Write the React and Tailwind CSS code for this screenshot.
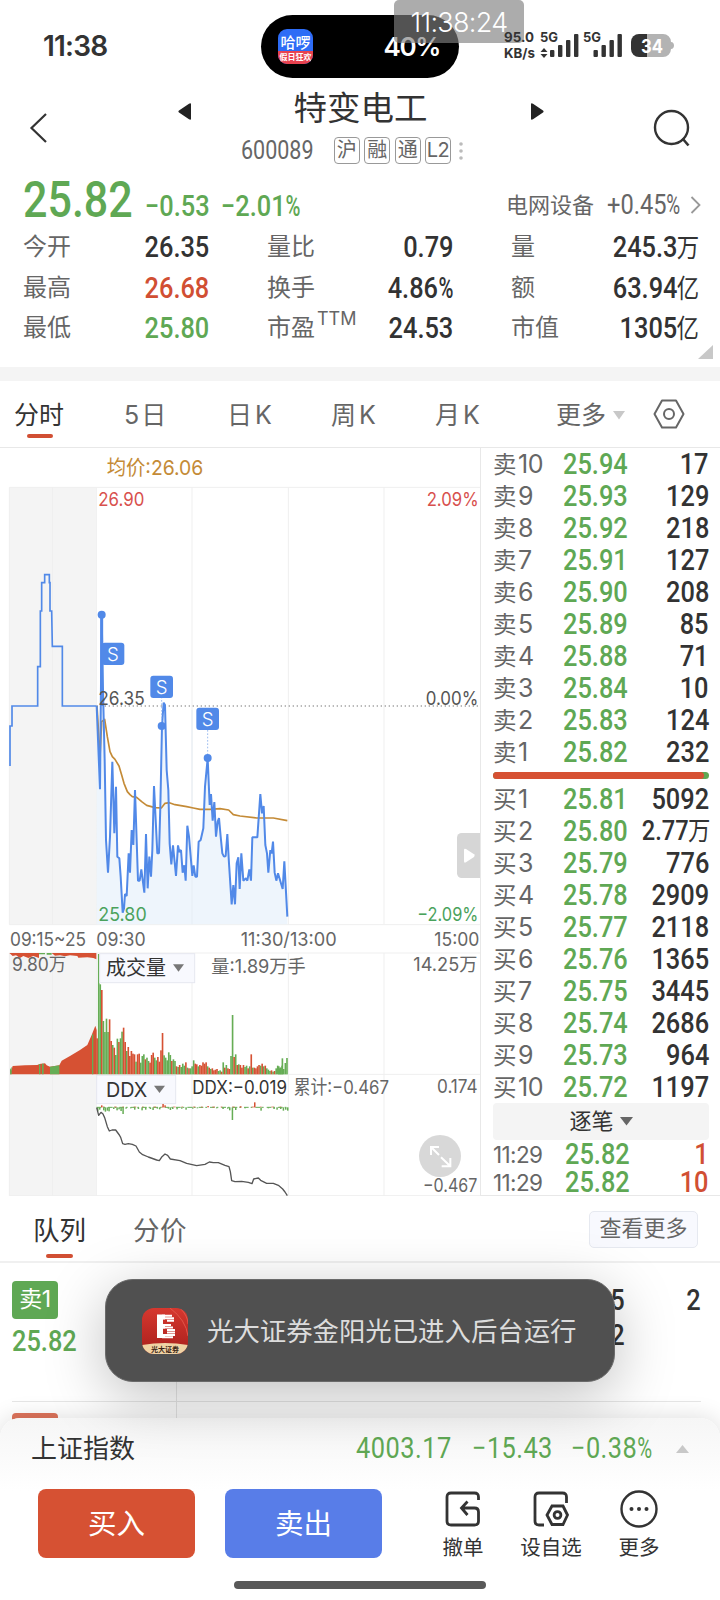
import React from 'react'

// price levels of the order book
const asks = [
  ['卖10', '25.94', '17'],
  ['卖9', '25.93', '129'],
  ['卖8', '25.92', '218'],
  ['卖7', '25.91', '127'],
  ['卖6', '25.90', '208'],
  ['卖5', '25.89', '85'],
  ['卖4', '25.88', '71'],
  ['卖3', '25.84', '10'],
  ['卖2', '25.83', '124'],
  ['卖1', '25.82', '232'],
]

const bids = [
  ['买1', '25.81', '5092'],
  ['买2', '25.80', '2.77万'],
  ['买3', '25.79', '776'],
  ['买4', '25.78', '2909'],
  ['买5', '25.77', '2118'],
  ['买6', '25.76', '1365'],
  ['买7', '25.75', '3445'],
  ['买8', '25.74', '2686'],
  ['买9', '25.73', '964'],
  ['买10', '25.72', '1197'],
]

const preOpen =
  '30,228 30,108 36,108 36,48 113,48 113,-70 121,-70 121,-237 125,-237 125,-322 134,-322 134,-346 148,-346 148,-322 150,-322 150,-237 155,-237 157,-131 187,-131 187,48 290,48'

const priceLine =
  '290,48 300,298 305,-226 309,0 314,210 318,450 324,548 330,440 337,215 343,430 348,290 352,500 358,505 362,560 368,668 372,655 375,612 380,618 386,490 390,548 395,420 400,465 405,300 414,572 419,572 424,538 433,608 438,432 443,595 448,500 453,560 457,480 462,288 472,490 477,490 481,350 486,107 491,38 495,45 500,240 505,300 509,460 514,523 519,466 528,558 534,466 538,486 543,480 548,548 553,526 557,572 562,407 567,440 577,558 581,526 586,560 591,560 596,455 602,450 610,415 615,290 623,205 629,345 633,312 638,392 643,336 648,440 653,395 657,384 662,440 667,490 672,500 677,498 682,432 687,520 695,643 700,585 705,643 710,520 715,502 719,597 724,490 730,572 738,565 742,572 748,538 753,572 757,442 772,442 781,312 786,370 791,348 796,465 801,490 805,548 811,480 815,490 819,455 824,548 829,572 834,550 848,597 853,514 862,680'

const avgLine =
  '291,48 300,200 305,95 314,88 322,140 330,185 337,200 345,208 357,228 365,255 372,280 382,305 390,314 397,320 410,322 425,335 440,346 465,353 484,354 495,340 508,338 525,344 560,350 580,354 600,358 630,358 660,356 686,360 700,374 720,378 770,384 820,384 862,392'

const ddxLine =
  '290,533 296,556 303,547 309,552 314,563 322,590 328,603 336,600 347,600 358,615 362,622 368,641 375,643 385,641 397,643 408,648 418,666 428,674 445,681 470,690 478,692 486,680 495,672 503,676 511,687 540,692 560,700 590,707 615,703 628,696 640,698 655,698 675,706 687,710 691,725 695,752 705,755 725,754 745,757 756,761 761,747 775,744 782,751 800,760 820,760 835,766 848,777 855,786 862,797'

// one bar per minute, height plus r / g
const volume =
  '108r 361g 270g 253r 160g 127g 167g 127g 165r 100r 88g 80r 58g 107g 97r 108g 128g 140r 97r 70g 82r 55r 70r 62r 60r 38g 60r 62r 35g 55g 60g 45r 50g 40g 35r 58r 65r 50g 42g 52r 38r 72r 124r 57g 50g 42g 66g 58g 40r 45g 40g 24r 22g 28r 22g 32g 26g 36r 20g 18r 18g 24g 42g 32r 30r 24g 28r 26r 36r 32r 36r 24g 20r 16g 18r 12r 14r 16r 10g 12g 8r 36g 20r 28g 18r 16r 55g 178g 52r 60g 28r 30g 28r 20r 28r 22g 26g 18r 24g 60r 20g 20r 18r 24r 28r 26g 32r 24g 26r 18g 14g 10g 12r 8g 10r 18g 26g 18g 20g 48g'.split(' ')

const tailVolume = '24g 20g 26g 16g 34g 49g'.split(' ')

const ddxBars = [
  [291, 12], [297, 7], [303, -6], [309, 9], [314, 13], [320, 10], [325, 12], [339, 5], [349, 9], [355, 6], [361, 11], [367, 20],
  [376, 4], [390, 3], [402, 7], [413, 5], [424, 9], [435, 7], [449, 5], [457, 8], [470, 4], [477, 6], [487, -10], [493, -6],
  [503, 4], [509, 8], [516, 5], [529, 6], [543, 4], [556, 7], [576, 4], [590, 3], [622, -4], [648, 3], [667, 5], [681, 4],
  [687, 9], [695, 38], [705, 8], [719, -3], [733, 3], [762, -15], [781, 10], [803, 3], [820, 5], [829, 7], [840, 5], [848, 10], [855, 7], [861, 10],
]

// narrow figures, the trailing unit is set a little smaller
function Num({ children, className = '' }) {
  const unit = /[万亿%]$/.test(children) ? children.slice(-1) : ''
  const digits = unit ? children.slice(0, -1) : children
  return (
    <span className={`inline-block whitespace-nowrap scale-x-[0.86] font-medium font-['Roboto','Noto_Sans_CJK_SC',sans-serif] text-[29.5px] ${className}`}>
      {digits}
      {unit === '%' && <span className="inline-block scale-x-[0.8] origin-left -mr-[4px]">%</span>}
      {unit && unit !== '%' && <span className="text-[26px] font-normal -ml-px -mr-[2px]">{unit}</span>}
    </span>
  )
}

function StatusBar() {
  return (
    <div className="relative h-[86px] flex items-start text-[#333]">
      <div className="w-[261px] pl-[43px] pt-[28px] text-[28px] leading-[36px] font-semibold tracking-[-0.8px]">11:38</div>
      <div className="w-[198px] h-[63px] mt-[15px] rounded-full bg-black flex items-center justify-between pl-[17px] pr-[19px] text-white">
        <div className="w-[35px] h-[35px] rounded-[9px] overflow-hidden bg-[#2d6cf6] flex flex-col items-center">
          <span className="h-[22px] leading-[25px] text-[15px] font-medium font-['Noto_Sans_CJK_SC',sans-serif]">哈啰</span>
          <span className="h-[13px] w-full bg-[#e8424f] text-center leading-[12px] text-[8px] font-bold whitespace-nowrap font-['Noto_Sans_CJK_SC',sans-serif]">假日狂欢</span>
        </div>
        <span className="text-[26px] leading-[36px] font-semibold tracking-[-1.4px]">40%</span>
      </div>
      <div className="absolute left-[394px] top-0 w-[130px] h-[43px] rounded-[5px] bg-[#808080]/65 text-white text-center text-[27px] leading-[45px] tracking-[-0.7px] font-light">
        11:38:24
      </div>
      <svg className="relative ml-[41px] mt-[24px]" width="176" height="40" viewBox="500 24 176 40">
        <g fill="#333" fontFamily="Inter" fontWeight="700" fontSize="13.5">
          <text x="504" y="42" textLength="30" lengthAdjust="spacingAndGlyphs">95.0</text>
          <text x="504" y="57.5" textLength="31" lengthAdjust="spacingAndGlyphs">KB/s</text>
          <text x="540" y="42" textLength="18" lengthAdjust="spacingAndGlyphs">5G</text>
          <text x="583" y="42" textLength="18" lengthAdjust="spacingAndGlyphs">5G</text>
        </g>
        <path d="M540.5 52l3.5-4 3.5 4zM540.5 54h7l-3.5 4z" fill="#333" />
        <g fill="#333">
          <rect x="550" y="50" width="4.4" height="7" rx="1" />
          <rect x="558" y="45" width="4.4" height="12" rx="1" />
          <rect x="566" y="40" width="4.4" height="17" rx="1" />
          <rect x="574" y="34" width="4.4" height="23" rx="1" />
          <rect x="593.500" y="50" width="4.4" height="7" rx="1" />
          <rect x="601.500" y="45" width="4.4" height="12" rx="1" />
          <rect x="609.500" y="40" width="4.4" height="17" rx="1" />
          <rect x="617.500" y="34" width="4.4" height="23" rx="1" />
        </g>
        <path d="M639 34h24a8 8 0 0 1 8 8c4 0 4 7 0 7a8 8 0 0 1-8 8h-24z" fill="#b3b3b3" />
        <path d="M647 34v23h-8a8 8 0 0 1-8-8v-7a8 8 0 0 1 8-8z" fill="#333" />
        <text x="641" y="52.5" fill="#fff" fontFamily="Inter" fontWeight="700" fontSize="19" textLength="22" lengthAdjust="spacingAndGlyphs">34</text>
      </svg>
    </div>
  )
}

function Header() {
  return (
    <div className="h-[88px] flex justify-between items-start">
      <svg className="ml-[24px] mt-[24px]" width="32" height="36" viewBox="24 110 32 36">
        <path d="M46 114L31.500 128L46 142" fill="none" stroke="#333" strokeWidth="2.2" />
      </svg>
      <div className="w-[366px] ml-[14px]">
        <div className="flex items-center justify-between h-[44px]">
          <svg className="mt-[6px]" width="14" height="17" viewBox="0 0 14 17"><path d="M13 1v15c0 1-1 1-2 .3L1 9.500c-.8-.6-.8-1.400 0-2L11 .7c1-.7 2-.7 2 .3z" fill="#222" /></svg>
          <span className="text-[33.500px] leading-[40px] text-[#333] -mt-px">特变电工</span>
          <svg className="mt-[6px]" width="14" height="17" viewBox="0 0 14 17"><path d="M1 1v15c0 1 1 1 2 .3l10-6.800c.8-.6.8-1.400 0-2L3 .7C2 0 1 0 1 1z" fill="#222" /></svg>
        </div>
        <div className="flex items-center h-[28px] mt-[6px] pl-[63px] text-[#666]">
          <Num className="origin-left text-[25px]! leading-[28px] w-[93px] font-normal! mt-[2px]">600089</Num>
          <div className="flex gap-[4.500px] mt-px">
            {['沪', '融', '通', 'L2'].map((tag) => (
              <span key={tag} className="w-[26px] h-[27px] border border-[#999] rounded-[4px] text-[20px] leading-[25px] text-center tracking-[-0.5px] flex justify-center">
                {tag}
              </span>
            ))}
          </div>
          <svg className="ml-[8px] mt-px" width="4" height="22" fill="#bbb"><circle cx="2" cy="4" r="1.800" /><circle cx="2" cy="11" r="1.800" /><circle cx="2" cy="18" r="1.800" /></svg>
        </div>
      </div>
      <svg className="mr-[29px] mt-[22px]" width="40" height="40" viewBox="650 108 40 40">
        <circle cx="670.500" cy="127.500" r="16.500" fill="none" stroke="#333" strokeWidth="2.400" />
        <path d="M681.500 138.500l6 7" stroke="#333" strokeWidth="2.600" />
      </svg>
    </div>
  )
}

function Stat({ label, sup, value, color = 'text-[#333]' }) {
  return (
    <div className="flex justify-between items-center h-[40.500px]">
      <span className="text-[24px] leading-[36px] text-[#666] whitespace-nowrap">
        {label}
        {sup && <span className="inline-block ml-[2px] text-[18px] leading-[18px] -translate-y-[11px]">{sup}</span>}
      </span>
      <Num className={`origin-right ${color}`}>{value}</Num>
    </div>
  )
}

function Quote() {
  return (
    <div className="h-[193px] relative">
      <div className="h-[53px] flex items-center pl-[23px] pr-[19px] text-[#5fa854]">
        <Num className="origin-left w-[122px] text-[50px]! leading-[50px] -mt-[2px]">25.82</Num>
        <Num className="origin-left w-[76px] mt-[11px]">−0.53</Num>
        <Num className="origin-left mt-[11px]">−2.01%</Num>
        <div className="ml-auto mt-[9px] flex items-center text-[#666]">
          <span className="text-[22px] leading-[32px] mr-[13px]">电网设备</span>
          <Num className="origin-left w-[83px] text-[27.500px]! font-normal!">+0.45%</Num>
          <svg width="11" height="18" viewBox="0 0 11 18"><path d="M1.500 1l8 8-8 8" fill="none" stroke="#999" strokeWidth="1.800" /></svg>
        </div>
      </div>
      <div className="grid grid-cols-3 gap-x-[58px] pl-[23px] pr-[23px]">
        <Stat label="今开" value="26.35" />
        <Stat label="量比" value="0.79" />
        <Stat label="量" value="245.3万" />
        <Stat label="最高" value="26.68" color="text-[#d14f33]" />
        <Stat label="换手" value="4.86%" />
        <Stat label="额" value="63.94亿" />
        <Stat label="最低" value="25.80" color="text-[#5fa854]" />
        <Stat label="市盈" sup="TTM" value="24.53" />
        <Stat label="市值" value="1305亿" />
      </div>
      <svg className="absolute right-[7px] bottom-[8px]" width="15" height="14"><path d="M15 0v14H0z" fill="#c8c8c8" /></svg>
    </div>
  )
}

function ChartTabs() {
  return (
    <div className="h-[67px] border-b border-[#e8e8e8] flex text-[25px] leading-[36px] text-[#666] pt-[16px]">
      <div className="w-[109px] pl-[14px] text-[#333]">
        分时
        <div className="ml-[13px] mt-px w-[26px] h-[4px] rounded-full bg-[#d14f33]" />
      </div>
      <div className="w-[104px] pl-[15px]"><span className="mr-[2px]">5</span>日</div>
      <div className="w-[104px] pl-[14px]">日<span className="ml-[3px]">K</span></div>
      <div className="w-[104px] pl-[14px]">周<span className="ml-[3px]">K</span></div>
      <div className="w-[104px] pl-[14px]">月<span className="ml-[3px]">K</span></div>
      <div className="pl-[31px] flex items-center h-[36px]">
        更多
        <svg className="ml-[7px]" width="12" height="9"><path d="M0 0h12L6 8.500z" fill="#c8c8c8" /></svg>
      </div>
      <svg className="ml-[28px] mt-[2px]" width="32" height="30" viewBox="0 0 32 30" fill="none" stroke="#666" strokeWidth="2">
        <path d="M9 1.500h14L30.500 15 23 28.500H9L1.500 15z" strokeLinejoin="round" />
        <circle cx="16" cy="15" r="5" />
      </svg>
    </div>
  )
}

function VolumeBar({ x, bar }) {
  const h = parseInt(bar)
  return <rect x={x} y={433 - h} width="4.9" height={h} fill={bar.endsWith('r') ? '#d65133' : '#66ad55'} />
}

function Marker({ x, y }) {
  return (
    <g>
      <rect x={x} y={y} width="68" height="67" rx="9" fill="#5189e8" />
      <text x={x + 34} y={y + 54} textAnchor="middle" fill="#fff" fontSize="56" fontWeight="300">S</text>
    </g>
  )
}

// drawn in thirds of a pixel
function Chart() {
  return (
    <svg className="shrink-0" width="480" height="748" viewBox="0 0 1440 2244" fontFamily="Inter, 'Noto Sans CJK SC', sans-serif" fontSize="57" fill="#666">
      <rect x="28" y="118" width="261" height="1312" fill="#f4f4f4" />
      <rect x="28" y="1515" width="261" height="729" fill="#f4f4f4" />
      <g stroke="#efefef" strokeWidth="3" fill="none">
        <path d="M157 118V1430M289 118V1430M576 118V1430M865 118V1430M1152 118V1430" />
        <path d="M157 1515V2244M289 1515V2244M576 1515V2244M865 1515V2244M1152 1515V2244" />
        <path d="M28 1430V118H1440M28 1430H1440M28 1515H1440M28 1879H1440M28 1515V2244M28 2243H1440" />
      </g>
      <text x="320" y="81" fill="#c48b37" fontSize="62" textLength="290" lengthAdjust="spacingAndGlyphs">均价:26.06</text>

      <g transform="translate(0 726)">
        <path d="M290 48H1440" stroke="#777" strokeWidth="3.500" strokeDasharray="4 8" />
        <polygon points={`${priceLine} 862,703 290,703`} fill="#eef5fc" />
        <path d="M576 60V703" stroke="#e6edf4" strokeWidth="3" />
        <polyline points={avgLine} fill="none" stroke="#c48b37" strokeWidth="5" strokeLinejoin="round" />
        <polyline points={preOpen} fill="none" stroke="#5189e8" strokeWidth="5" />
        <polyline points={priceLine} fill="none" stroke="#5189e8" strokeWidth="6" strokeLinejoin="bevel" />
        <path d="M305 -226V48" stroke="#5189e8" strokeWidth="9" />
        <path d="M485 20V107M623 120V205" stroke="#9dbdf0" strokeWidth="3" strokeDasharray="5 5" />
        <circle cx="305" cy="-226" r="12" fill="#5189e8" />
        <circle cx="485" cy="108" r="12" fill="#5189e8" />
        <circle cx="623" cy="204" r="12" fill="#5189e8" />
        <Marker x={305} y={-142} />
        <Marker x={451} y={-43} />
        <Marker x={589} y={53} />
        <text x="295" y="45" fill="#555" textLength="139" lengthAdjust="spacingAndGlyphs">26.35</text>
        <text x="1277" y="45" fill="#555" textLength="158" lengthAdjust="spacingAndGlyphs">0.00%</text>
        <text x="295" y="692" fill="#4aa25c" textLength="145" lengthAdjust="spacingAndGlyphs">25.80</text>
        <text x="1252" y="692" fill="#4aa25c" textLength="183" lengthAdjust="spacingAndGlyphs">−2.09%</text>
        <rect x="1371" y="429" width="90" height="135" rx="14" fill="#d6d6d6" />
        <path d="M1392 480v34q0 6 6 3l24-16q4-4 0-8l-24-16q-6-3-6 3z" fill="#fff" />
        <text x="30" y="768" textLength="228" lengthAdjust="spacingAndGlyphs">09:15~25</text>
        <text x="289" y="768" textLength="148" lengthAdjust="spacingAndGlyphs">09:30</text>
        <text x="722" y="768" textLength="288" lengthAdjust="spacingAndGlyphs">11:30/13:00</text>
        <text x="1303" y="768" textLength="135" lengthAdjust="spacingAndGlyphs">15:00</text>
      </g>
      <text x="295" y="173" fill="#d8504d" textLength="138" lengthAdjust="spacingAndGlyphs">26.90</text>
      <text x="1280" y="173" fill="#d8504d" textLength="156" lengthAdjust="spacingAndGlyphs">2.09%</text>

      <g transform="translate(0 1446)">
        <path d="M28 69H117V84L100 78L85 84L70 78L60 84L48 76L38 78zM155 69H289V88L280 84L262 82L235 83L232 78L210 76L195 79L180 76L165 77z" fill="#d65133" />
        <path d="M117 69h18v4h-18zM140 69h15v5h-15z" fill="#66ad55" />
        <path d="M30 433L38 408L75 406L112 405L118 402L135 400L140 406L150 410L178 406L185 392L210 378L240 360L262 345L275 315L286 287L290 300V433z" fill="#d65133" />
        <path d="M30 433v-14l5-9v23zM117 433v-31h4v31zM126 433v-32h5v32zM150 433v-23l28-4v27zM276 433V313h4v120z" fill="#66ad55" />
        {volume.map((bar, i) => <VolumeBar key={i} x={289 + i * 4.67} bar={bar} />)}
        {tailVolume.map((bar, i) => <VolumeBar key={i} x={834 + i * 4.900} bar={bar} />)}

        <rect x="299" y="71" width="285" height="87" fill="#f8f9fe" stroke="#e6e8f0" strokeWidth="3" />
        <text x="318" y="136" fill="#333" fontSize="60" textLength="180" lengthAdjust="spacingAndGlyphs">成交量</text>
        <path d="M519 103h33l-16.500 22z" fill="#777" />
        <text x="36" y="123" fontSize="54" textLength="163" lengthAdjust="spacingAndGlyphs">9.80万</text>
        <text x="634" y="129" fontSize="56" textLength="283" lengthAdjust="spacingAndGlyphs">量:1.89万手</text>
        <text x="1240" y="123" fontSize="56" textLength="192" lengthAdjust="spacingAndGlyphs">14.25万</text>

        <rect x="290" y="436" width="237" height="85" fill="#f8f9fe" stroke="#e6e8f0" strokeWidth="3" />
        <text x="318" y="502" fill="#333" fontSize="61" textLength="124" lengthAdjust="spacingAndGlyphs">DDX</text>
        <path d="M462 467h33l-16.500 22z" fill="#777" />
        <text x="577" y="493" fill="#333" fontSize="57" textLength="284" lengthAdjust="spacingAndGlyphs">DDX:−0.019</text>
        <text x="881" y="493" fontSize="57" textLength="286" lengthAdjust="spacingAndGlyphs">累计:−0.467</text>
        <text x="1311" y="489" textLength="122" lengthAdjust="spacingAndGlyphs">0.174</text>

        <path d="M290 532H862" stroke="#66ad55" strokeWidth="3" strokeDasharray="14 6 5 9" />
        <path d="M308 531H862" stroke="#d65133" strokeWidth="2" strokeDasharray="5 29 8 17" />
        {ddxBars.map(([x, h]) => (
          <rect key={x} x={x} y={h > 0 ? 532 : 532 + h} width="4.500" height={Math.abs(h)} fill={h > 0 ? '#66ad55' : '#d65133'} />
        ))}
        <polyline points={ddxLine} fill="none" stroke="#555" strokeWidth="4" strokeLinejoin="round" />

        <circle cx="1320" cy="678" r="63" fill="#d8d8d8" />
        <path d="M1293 675v-24h24M1293 651l24 24M1323 682l28 27M1351 684v25h-26" fill="none" stroke="#fff" strokeWidth="6" />
        <text x="1269" y="786" textLength="163" lengthAdjust="spacingAndGlyphs">−0.467</text>
      </g>
    </svg>
  )
}

function Level({ row }) {
  return (
    <div className="h-[32px] flex items-center">
      <span className="w-[70px] shrink-0 text-[23.500px] leading-[32px] text-[#666] tracking-[-0.5px]">
        {row[0][0]}
        <span className="inline-block text-[25px] ml-[2px]">{row[0].slice(1)}</span>
      </span>
      <Num className="origin-left w-[60px] leading-[33px] text-[#5fa854]">{row[1]}</Num>
      <Num className={`origin-right ml-auto leading-[33px] text-[#333] ${row[2].includes('万') ? 'text-[27.500px]!' : ''}`}>{row[2]}</Num>
    </div>
  )
}

function OrderBook() {
  return (
    <div className="w-[240px] shrink-0 border-l border-b border-[#e8e8e8] pl-[12px] pr-[11px]">
      {asks.map((row) => <Level key={row[0]} row={row} />)}
      <div className="mt-[4px] mb-[4px] h-[7px] rounded-full bg-[#5fa854]">
        <div className="h-full w-[211px] rounded-full bg-[#d65133]" />
      </div>
      {bids.map((row) => <Level key={row[0]} row={row} />)}
      <div className="h-[37px] rounded-[4px] bg-[#f4f4f4] flex items-center justify-center gap-[6px] text-[22px] text-[#333]">
        逐笔
        <svg width="13" height="9"><path d="M0 0h13L6.500 8.500z" fill="#666" /></svg>
      </div>
      {['1', '10'].map((qty) => (
        <div key={qty} className="h-[28px] flex items-center">
          <span className="w-[72px] shrink-0 text-[22.500px] leading-[28px] text-[#666] tracking-[-0.6px] pt-[2px]">11:29</span>
          <Num className="origin-left leading-[29px] text-[#5fa854]">25.82</Num>
          <Num className="origin-right ml-auto leading-[29px] text-[#d14f33]">{qty}</Num>
        </div>
      ))}
    </div>
  )
}

function Queue() {
  return (
    <div className="h-[404px] relative">
      <div className="h-[67px] border-b-2 border-[#f0f0f0] flex items-start text-[26.500px] leading-[36px] text-[#666]">
        <div className="ml-[33px] mt-[16px] w-[100px] text-[#333]">
          队列
          <div className="ml-[13px] mt-[6px] w-[27px] h-[4px] rounded-full bg-[#d14f33]" />
        </div>
        <div className="mt-[16px] tracking-[0.5px]">分价</div>
        <div className="ml-auto mr-[22px] mt-[15px] w-[109px] h-[37px] border border-[#e6e9f0] rounded-[5px] bg-[#f8f9fe] text-[22px] leading-[33px] text-center">查看更多</div>
      </div>
      <div className="ml-[12px] mr-[19px] h-[139px] border-b border-[#e6e6e6] flex">
        <div className="w-[165px] mt-[16px] h-[122px] border-r border-[#e6e6e6]">
          <div className="mt-[2px] w-[46px] h-[38px] rounded-[4px] bg-[#5fa854] text-white text-[23px] leading-[36px] text-center tracking-[-0.5px]">卖1</div>
          <Num className="origin-left text-[#5fa854]">25.82</Num>
        </div>
        <div className="w-[448px] pt-[15px] flex flex-col items-end text-[#333]">
          <Num className="origin-right leading-[44px]">5</Num>
          <Num className="origin-right leading-[27px]">2</Num>
        </div>
        <Num className="ml-auto mt-[15px] origin-right leading-[44px] text-[#333]">2</Num>
      </div>
      <div className="ml-[12px] w-[165px] h-[20px] pt-[11px] border-r border-[#e6e6e6]">
        <div className="w-[46px] h-[20px] rounded-[4px] bg-[#d65133]/80" />
      </div>
    </div>
  )
}

function Toast() {
  return (
    <div className="absolute z-10 left-[105px] top-[1279px] w-[510px] h-[103px] rounded-[28px] bg-[#505050] border border-[#6a6a6a] shadow-[0_14px_60px_rgba(0,0,0,0.25)] flex items-center pl-[36px]">
      <svg width="46" height="46" viewBox="0 0 46 46">
        <defs>
          <linearGradient id="logo" x1="0" y1="0" x2="0" y2="1"><stop offset="0" stopColor="#d6382f" /><stop offset="1" stopColor="#a81f1c" /></linearGradient>
          <clipPath id="logoClip"><rect width="46" height="46" rx="12" /></clipPath>
        </defs>
        <g clipPath="url(#logoClip)">
          <rect width="46" height="46" fill="url(#logo)" />
          <path d="M28 0q16 12 18 28M38 0q8 8 8 16" stroke="#e0564a" strokeWidth="1" fill="none" />
          <path d="M0 37q23-4 46 0v9H0z" fill="#f0d3a4" />
          <path d="M15 6.500h8v5h-2v6h2v3h-2v6h2v3.500h-8z" fill="#fff" />
          <path d="M20 7.800h10M20 10.300h12M25 12.800h7M20 17h9M20 19.500h11M25 22h8M25 24.500h8M20 27h13M20 29.200h11" stroke="#fff" strokeWidth="1.900" />
          <text x="23" y="44" fontSize="7" fontWeight="700" fill="#3a2313" textAnchor="middle" fontFamily="'Noto Sans CJK SC', sans-serif">光大证券</text>
        </g>
      </svg>
      <span className="ml-[19px] text-[26.400px] leading-[36px] text-[#dcdcdc] whitespace-nowrap">光大证券金阳光已进入后台运行</span>
    </div>
  )
}

function BottomBar() {
  return (
    <div className="absolute left-0 top-[1418px] w-[720px] h-[182px] rounded-t-[20px] bg-white shadow-[0_0_24px_rgba(0,0,0,0.14)]">
      <div className="h-[182px] rounded-t-[20px] bg-linear-to-b from-[#f6f6f6] to-white to-40%">
        <div className="h-[61px] flex items-center pl-[31px] pr-[31px]">
          <span className="w-[325px] text-[26px] leading-[36px] text-[#333]">上证指数</span>
          <div className="flex-1 flex text-[#5fa854]">
            <Num className="origin-left w-[116px] font-normal! tracking-[0.6px]">4003.17</Num>
            <Num className="origin-left w-[99px] font-normal! tracking-[0.5px]">−15.43</Num>
            <Num className="origin-left font-normal! tracking-[0.5px]">−0.38%</Num>
          </div>
          <svg width="13" height="8"><path d="M0 8h13L6.500 0z" fill="#c8c8c8" /></svg>
        </div>
        <div className="flex pl-[38px] mt-[10px] text-[#333]">
          <div className="w-[157px] h-[69px] rounded-[8px] bg-[#d65133] text-white text-[28.500px] leading-[70px] text-center">买入</div>
          <div className="ml-[30px] w-[157px] h-[69px] rounded-[8px] bg-[#587de8] text-white text-[28.500px] leading-[70px] text-center">卖出</div>
          <div className="ml-[41px] w-[80px] flex flex-col items-center text-[20.500px] leading-[30px]">
            <svg className="mt-[2px]" width="36" height="36" viewBox="0 0 36 36" fill="none" stroke="#333" strokeWidth="2.800">
              <path d="M33.500 9V6q0-4-4-4H6Q2 2 2 6v24q0 4 4 4h23.500q4 0 4-4V21q0-4-4-4H18M22.500 10.500L16.500 17l6 7" />
            </svg>
            <span className="mt-[6px]">撤单</span>
          </div>
          <div className="ml-[8px] w-[80px] flex flex-col items-center text-[20.500px] leading-[30px]">
            <svg className="mt-[2px]" width="36" height="36" viewBox="0 0 36 36" fill="none" stroke="#333" strokeWidth="2.800">
              <path d="M33.500 12V6q0-4-4-4H6Q2 2 2 6v24q0 4 4 4h5M19 15h11l4.500 9L30 33.500H19L14 24z" />
              <circle cx="24.500" cy="24" r="3.400" />
            </svg>
            <span className="mt-[6px]">设自选</span>
          </div>
          <div className="ml-[8px] w-[80px] flex flex-col items-center text-[20.500px] leading-[30px]">
            <svg className="mt-px" width="38" height="38" viewBox="0 0 38 38">
              <circle cx="19" cy="19" r="17.500" fill="none" stroke="#333" strokeWidth="2.400" />
              <g fill="#333"><circle cx="11.500" cy="19" r="2" /><circle cx="19" cy="19" r="2" /><circle cx="26.500" cy="19" r="2" /></g>
            </svg>
            <span className="mt-[5px]">更多</span>
          </div>
        </div>
        <div className="mx-auto mt-[18px] w-[252px] h-[8px] rounded-full bg-[#595959]" />
      </div>
    </div>
  )
}

export default function App() {
  return (
    <div className="relative w-[720px] h-[1600px] overflow-hidden bg-white font-['Inter','Noto_Sans_CJK_SC',sans-serif]">
      <StatusBar />
      <Header />
      <Quote />
      <div className="h-[14px] bg-[#f4f4f4]" />
      <ChartTabs />
      <div className="flex h-[748px]">
        <Chart />
        <OrderBook />
      </div>
      <Queue />
      <BottomBar />
      <Toast />
    </div>
  )
}
